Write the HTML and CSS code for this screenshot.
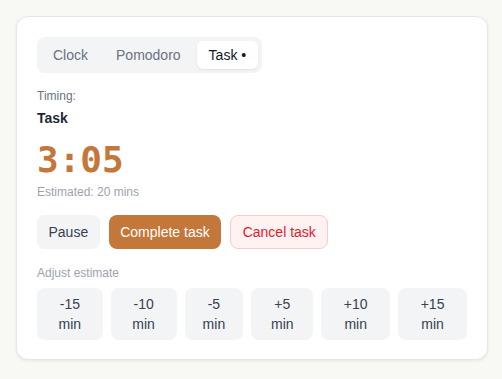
FILE: index.html
```html
<!DOCTYPE html>
<html lang="en">
<head>
    <meta charset="UTF-8">
    <meta name="viewport" content="width=device-width, initial-scale=1.0">
    <title>Timer</title>
    <link rel="stylesheet" href="styles.css">
</head>
<body>
    <div class="card">
        <div class="tabs">
            <button class="tab">Clock</button>
            <button class="tab">Pomodoro</button>
            <button class="tab active">Task •</button>
        </div>
        <p class="label">Timing:</p>
        <p class="task-name">Task</p>
        <div class="time">3:05</div>
        <p class="estimate">Estimated: 20 mins</p>
        <div class="actions">
            <button class="btn btn-pause">Pause</button>
            <button class="btn btn-complete">Complete task</button>
            <button class="btn btn-cancel">Cancel task</button>
        </div>
        <p class="adjust-label">Adjust estimate</p>
        <div class="adjust">
            <button class="adj">-15 min</button>
            <button class="adj">-10 min</button>
            <button class="adj">-5 min</button>
            <button class="adj">+5 min</button>
            <button class="adj">+10 min</button>
            <button class="adj">+15 min</button>
        </div>
    </div>
</body>
</html>
```

FILE: styles.css
```css
body {
    font-family: "Liberation Sans", Arial, sans-serif;
    background-color: #f8f8f4;
    margin: 0;
    padding: 16px 14px 16px 16px;
}
button {
    font-family: inherit;
    cursor: pointer;
}
.card {
    background-color: #fff;
    border: 1px solid #e5e7eb;
    border-radius: 12px;
    box-shadow: 0 1px 3px rgba(0, 0, 0, 0.08);
    padding: 20px 20px 19px 20px;
}
.tabs {
    display: inline-flex;
    gap: 4px;
    padding: 4px;
    background-color: #f3f4f6;
    border-radius: 8px;
}
.tab {
    height: 28px;
    padding: 0 12px;
    border: none;
    border-radius: 6px;
    background: none;
    font-size: 14px;
    color: #6b7280;
}
.tab.active {
    background-color: #fff;
    color: #111827;
    box-shadow: 0 1px 2px rgba(0, 0, 0, 0.08);
}
.label {
    margin: 16px 0 0 0;
    font-size: 12px;
    line-height: 14px;
    color: #6b7280;
}
.task-name {
    margin: 7px 0 0 0;
    font-size: 14px;
    line-height: 16px;
    font-weight: bold;
    color: #1f2937;
}
.time {
    margin-top: 14px;
    font-family: "DejaVu Sans Mono", monospace;
    font-weight: bold;
    font-size: 36px;
    line-height: 40px;
    color: #c4773b;
}
.estimate {
    margin: 5px 0 0 0;
    font-size: 12px;
    line-height: 14px;
    color: #9ca3af;
}
.actions {
    display: flex;
    gap: 9px;
    margin-top: 16px;
}
.btn {
    height: 34px;
    padding: 0 11.5px;
    border: none;
    border-radius: 8px;
    font-size: 14px;
}
.btn-pause {
    background-color: #f3f4f6;
    color: #374151;
}
.btn-complete {
    background-color: #c4773b;
    color: #fff;
}
.btn-cancel {
    background-color: #fef2f2;
    border: 1px solid #fecaca;
    color: #e11d2a;
}
.adjust-label {
    margin: 17px 0 0 0;
    font-size: 12px;
    line-height: 14px;
    color: #9ca3af;
}
.adjust {
    display: flex;
    gap: 8px;
    margin-top: 8px;
}
.adj {
    flex: 1 1 auto;
    padding: 6px 12px;
    border: none;
    border-radius: 8px;
    background-color: #f3f4f6;
    font-size: 14px;
    line-height: 20px;
    color: #374151;
}
```
